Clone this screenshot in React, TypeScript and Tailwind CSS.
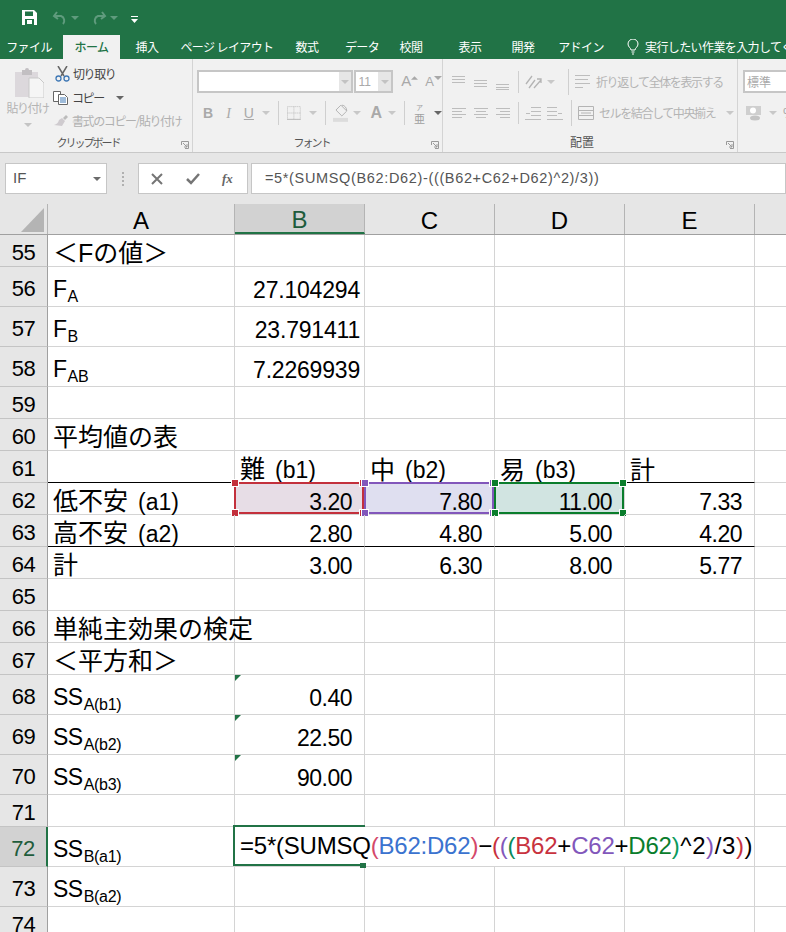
import type { ReactNode } from "react";

const UI_FONT = "font-['Noto_Sans_CJK_JP',sans-serif]";
const CELL_FONT = "font-['Liberation_Sans','Noto_Sans_CJK_JP',sans-serif]";

const TABS: [string, number][] = [
  ["ホーム", 57],
  ["挿入", 54],
  ["ページ レイアウト", 106],
  ["数式", 54],
  ["データ", 56],
  ["校閲", 42],
  ["表示", 76],
  ["開発", 30],
  ["アドイン", 86],
];

function Caret({ color = "#a8a8a8" }: { color?: string }) {
  return (
    <svg width="8" height="4" viewBox="0 0 8 4" className="shrink-0">
      <path d="M0 0h8L4 4z" fill={color} />
    </svg>
  );
}

// horizontal rule icons for the alignment group
function Lines({ rows, w = 16, h = 16 }: { rows: [number, number, number][]; w?: number; h?: number }) {
  return (
    <svg width={w} height={h} viewBox={`0 0 ${w} ${h}`} className="shrink-0">
      {rows.map(([a, b, y], i) => (
        <line key={i} x1={a} x2={b} y1={y + 0.5} y2={y + 0.5} stroke="#bdbdbd" />
      ))}
    </svg>
  );
}

function TitleBar() {
  return (
    <div className="flex h-[35px] items-center bg-[#217346] pl-[22px]">
      <svg width="15" height="15" viewBox="0 0 15 15">
        <path d="M0 0h12l3 3v12H0z" fill="#fff" />
        <rect x="3" y="1.500" width="8" height="4.500" fill="#217346" />
        <rect x="3" y="9" width="9" height="6" fill="#217346" />
        <rect x="5" y="10" width="5" height="4" fill="#fff" />
      </svg>
      <svg width="16" height="14" viewBox="0 0 16 14" fill="none" stroke="#5f9b7d" strokeWidth="2" className="ml-[15px]">
        <path d="M5 1 2 5l4 3M2 5h7a5 5 0 0 1 2 8" />
      </svg>
      <div className="ml-[3px]"><Caret color="#5f9b7d" /></div>
      <svg width="16" height="14" viewBox="0 0 16 14" fill="none" stroke="#5f9b7d" strokeWidth="2" className="ml-[12px]">
        <path d="m11 1 3 4-4 3m4-3H7a5 5 0 0 0-2 8" />
      </svg>
      <div className="ml-[3px]"><Caret color="#5f9b7d" /></div>
      <svg width="7" height="7" viewBox="0 0 7 7" className="ml-[13px] mt-[3px]">
        <path d="M0 0h7v1H0zM0 3h7L3.500 7z" fill="#fff" />
      </svg>
    </div>
  );
}

function TabBar() {
  return (
    <div className={`flex h-[24px] items-center bg-[#217346] text-[12px] tracking-[-0.6px] text-white ${UI_FONT}`}>
      <div className="flex w-[63px] shrink-0 justify-center whitespace-nowrap pr-[5px]">ファイル</div>
      {TABS.map(([label, width], i) => (
        <div
          key={label}
          style={{ width }}
          className={`flex h-full shrink-0 items-center justify-center whitespace-nowrap ${
            i === 0 ? "bg-[#f1f1f1] font-medium text-[#217346]" : ""
          }`}
        >
          {label}
        </div>
      ))}
      <svg width="12" height="16" viewBox="0 0 12 16" fill="none" stroke="#fff" className="ml-[3px] shrink-0">
        <path d="M4 11c0-2-3-3-3-6a5 5 0 0 1 10 0c0 3-3 4-3 6zM4.500 13h3M5 15h2" />
      </svg>
      <span className="ml-[6px] whitespace-nowrap">実行したい作業を入力してください</span>
    </div>
  );
}

function GroupLabel({ children, wide }: { children: string; wide?: boolean }) {
  return (
    <div
      className={`relative mt-auto flex h-[18px] items-center justify-center whitespace-nowrap pb-[2px] pr-[16px] text-[#555] ${
        wide ? "text-[12px]" : "text-[11px] tracking-[-2px]"
      }`}
    >
      {children}
      <svg width="8" height="8" viewBox="0 0 8 8" fill="none" stroke="#9a9a9a" className="absolute bottom-[3px] right-[3px]">
        <path d="M.5 4V.5H7.500V7.500H4M2 2l4 4M3 6h3V3" />
      </svg>
    </div>
  );
}

function ClipboardGroup() {
  return (
    <div className="flex w-[193px] shrink-0 flex-col border-r border-[#d4d4d4]">
      <div className="flex pt-[3px]">
        <div className="mt-[5px] flex w-[52px] shrink-0 flex-col items-center pl-[3px]">
          <svg width="30" height="31" viewBox="0 0 30 31" className="ml-[2px]">
            <path d="M1 5h23v25H1z" fill="#dcd8dc" />
            <path d="M8 3h3a2 2 0 0 1 4 0h3v5H8z" fill="#c2bfc2" />
            <path d="M15 11h10l5 5v15H15z" fill="#f5f5f5" stroke="#c9c9c9" />
          </svg>
          <span className="mt-[1px] whitespace-nowrap text-[12px] tracking-[-1.5px] text-[#b4b4b4]">貼り付け</span>
          <div className="mt-[6px]"><Caret color="#c4c4c4" /></div>
        </div>
        <div className="flex flex-col text-[12px] tracking-[-1.4px]">
          <div className="flex h-[24px] items-center">
            <svg width="15" height="16" viewBox="0 0 15 16" fill="none" className="ml-[3px]">
              <path d="M3 0l6 10M12 0 6 10" stroke="#666" strokeWidth="1.500" />
              <circle cx="3.500" cy="12.500" r="2.500" stroke="#3f78b5" strokeWidth="1.300" />
              <circle cx="11.500" cy="12.500" r="2.500" stroke="#3f78b5" strokeWidth="1.300" />
            </svg>
            <span className="ml-[3px] text-[#444]">切り取り</span>
          </div>
          <div className="flex h-[23px] items-center">
            <svg width="16" height="14" viewBox="0 0 16 14" fill="#fff" stroke="#666" className="ml-[1px]">
              <path d="M.5.500h7v10h-7z" />
              <path d="M5.500 3.500h6l3 3v7h-9z" />
              <path d="M7 7h6M7 9h6M7 11h6" stroke="#3f78b5" />
            </svg>
            <span className="ml-[3px] text-[#444]">コピー</span>
            <div className="ml-[12px]"><Caret color="#666" /></div>
          </div>
          <div className="flex h-[24px] items-center">
            <svg width="16" height="15" viewBox="0 0 16 15" className="ml-[1px]">
              <path d="M9 4l3 3-3 5-8-1c3-1 4-2 5-5z" fill="#cfcbcf" />
              <path d="M10 4l3-3 2 2-3 3z" fill="#bcbcbc" />
            </svg>
            <span className="ml-[3px] whitespace-nowrap text-[#b0b0b0]">書式のコピー/貼り付け</span>
          </div>
        </div>
      </div>
      <GroupLabel>クリップボード</GroupLabel>
    </div>
  );
}

function FontGroup() {
  return (
    <div className="flex w-[250px] shrink-0 flex-col border-r border-[#d4d4d4] pl-[4px]">
      <div className="mt-[11px] flex items-center">
        <div className="flex h-[23px] w-[157px] justify-end border-2 border-[#c6c6c6] bg-white">
          <div className="flex w-[12px] items-center justify-center bg-[#e6e6e6]"><Caret color="#c2c2c2" /></div>
        </div>
        <div className="ml-[1px] flex h-[23px] w-[39px] items-center justify-between border-2 border-[#c6c6c6] bg-white pl-[2px] font-['Liberation_Sans',sans-serif] text-[12px] text-[#a9a9a9]">
          11
          <div className="flex h-full w-[13px] items-center justify-center bg-[#e6e6e6]"><Caret color="#c2c2c2" /></div>
        </div>
        <span className="ml-[8px] font-['Liberation_Sans',sans-serif] text-[15px] text-[#a9a9a9]">A</span>
        <svg width="7" height="4" viewBox="0 0 8 4" className="mb-[8px]"><path d="M0 4h8L4 0z" fill="#a9a9a9" /></svg>
        <span className="ml-[7px] font-['Liberation_Sans',sans-serif] text-[13px] text-[#a9a9a9]">A</span>
        <div className="mb-[8px]"><Caret /></div>
      </div>
      <div className="mt-[7px] flex h-[26px] items-center font-['Liberation_Sans',sans-serif] text-[14px] text-[#a9a9a9]">
        <b className="ml-[6px]">B</b>
        <i className="ml-[13px] font-['Liberation_Serif',serif]">I</i>
        <span className="ml-[13px] underline">U</span>
        <div className="ml-[8px]"><Caret color="#c8c8c8" /></div>
        <div className="ml-[8px] h-[24px] border-l border-[#cfcfcf]" />
        <svg width="14" height="14" viewBox="0 0 14 14" fill="none" stroke="#bdbdbd" strokeDasharray="1 1" className="ml-[8px]">
          <path d="M.5.500h13v13H.5zM7 .5v13M.5 7h13" />
          <path d="M0 13.500h14" strokeDasharray="none" />
        </svg>
        <div className="ml-[8px]"><Caret color="#c8c8c8" /></div>
        <div className="ml-[8px] h-[24px] border-l border-[#cfcfcf]" />
        <svg width="16" height="18" viewBox="0 0 16 18" fill="none" className="ml-[7px]">
          <path d="M8 1 14 7l-5 5-6-6z" stroke="#b4b4b4" />
          <path d="M9 1c3 0 5 3 5 6" stroke="#b4b4b4" />
          <rect y="14" width="16" height="4" fill="#dcdcdc" />
        </svg>
        <div className="ml-[5px]"><Caret color="#c8c8c8" /></div>
        <b className="ml-[9px] text-[16px]">A</b>
        <div className="ml-[6px]"><Caret color="#c8c8c8" /></div>
        <div className="ml-[8px] h-[24px] border-l border-[#cfcfcf]" />
        <div className="ml-[9px] flex flex-col items-center font-['Noto_Sans_CJK_JP',sans-serif] text-[#a0a0a0]">
          <span className="text-[7px] leading-[10px]">ア</span>
          <span className="text-[11px] leading-[13px]">亜</span>
        </div>
        <div className="ml-[9px]"><Caret color="#666" /></div>
      </div>
      <GroupLabel>フォント</GroupLabel>
    </div>
  );
}

function AlignGroup() {
  return (
    <div className="flex w-[295px] shrink-0 flex-col border-r border-[#d4d4d4] pl-[8px]">
      <div className="mt-[11px] flex h-[24px] items-center gap-[6px]">
        <Lines rows={[[1, 14, 2], [1, 14, 5], [1, 14, 8]]} />
        <Lines rows={[[1, 14, 6], [1, 14, 9], [1, 14, 12]]} />
        <Lines rows={[[1, 14, 10], [1, 14, 13], [1, 14, 15]]} />
        <div className="ml-[1px] h-[22px] border-l border-[#cfcfcf]" />
        <svg width="18" height="16" viewBox="0 0 18 16" fill="none" stroke="#b4b4b4" strokeWidth="1.300">
          <path d="M1 10 7 2M4 14 10 6M9 14l7-8M12 5h4v4" />
        </svg>
        <div className="-ml-[2px]"><Caret color="#c8c8c8" /></div>
        <div className="ml-[7px] h-[26px] border-l border-[#cfcfcf]" />
        <Lines rows={[[0, 15, 1], [0, 13, 5], [0, 15, 9], [0, 8, 13]]} />
        <span className="-ml-[1px] whitespace-nowrap text-[12px] tracking-[-1.4px] text-[#b4b4b4]">折り返して全体を表示する</span>
      </div>
      <div className="mt-[7px] flex h-[24px] items-center gap-[6px]">
        <Lines rows={[[1, 15, 3], [1, 11, 6], [1, 15, 9], [1, 11, 12]]} />
        <Lines rows={[[1, 15, 3], [3, 13, 6], [1, 15, 9], [3, 13, 12]]} />
        <Lines rows={[[1, 15, 3], [5, 15, 6], [1, 15, 9], [5, 15, 12]]} />
        <div className="ml-[1px] h-[22px] border-l border-[#cfcfcf]" />
        <Lines rows={[[6, 16, 2], [6, 16, 6], [6, 16, 10], [0, 16, 14], [1, 5, 8]]} />
        <Lines rows={[[0, 10, 2], [0, 10, 6], [0, 10, 10], [0, 16, 14], [11, 15, 8]]} />
        <div className="ml-[2px] h-[26px] border-l border-[#cfcfcf]" />
        <svg width="16" height="16" viewBox="0 0 16 16" fill="none" stroke="#b4b4b4" className="shrink-0">
          <path d="M.5 1.500h15v13H.5zM.5 5.500h15M.5 10.500h15M3 8h10" />
        </svg>
        <span className="-ml-[1px] whitespace-nowrap text-[12px] tracking-[-1.4px] text-[#b4b4b4]">セルを結合して中央揃え</span>
        <div className="ml-[5px]"><Caret color="#c8c8c8" /></div>
      </div>
      <div className="-ml-[8px] mt-auto"><GroupLabel wide>配置</GroupLabel></div>
    </div>
  );
}

function NumberGroup() {
  return (
    <div className="flex flex-col pl-[5px]">
      <div className="mt-[11px] flex h-[23px] w-[60px] items-center border-2 border-[#c6c6c6] bg-white pl-[2px] text-[12px] text-[#a9a9a9]">
        標準
      </div>
      <div className="mt-[8px] flex h-[24px] items-center">
        <svg width="16" height="16" viewBox="0 0 16 16" className="ml-[3px]">
          <rect y="1" width="15" height="9" fill="#cfcfcf" />
          <circle cx="7" cy="5.500" r="3" fill="#fff" />
          <ellipse cx="9" cy="13" rx="5" ry="2.500" fill="#c4c4c4" />
        </svg>
        <div className="ml-[7px]"><Caret color="#c8c8c8" /></div>
        <span className="ml-[6px] font-['Liberation_Sans',sans-serif] text-[14px] text-[#a9a9a9]">%</span>
      </div>
    </div>
  );
}

function FormulaBar() {
  return (
    <div className={`flex h-[52px] items-center border-t border-[#c8c8c8] bg-[#e6e6e6] pl-[5px] ${CELL_FONT}`}>
      <div className="flex h-[31px] w-[102px] items-center justify-between border border-[#c6c6c6] bg-white pl-[7px] pr-[5px] text-[15px] text-[#555]">
        IF
        <Caret color="#6b6b6b" />
      </div>
      <div className="ml-[15px] flex flex-col gap-[2px]">
        <div className="h-[2px] w-[2px] bg-[#b0b0b0]" />
        <div className="h-[2px] w-[2px] bg-[#b0b0b0]" />
        <div className="h-[2px] w-[2px] bg-[#b0b0b0]" />
        <div className="h-[2px] w-[2px] bg-[#b0b0b0]" />
      </div>
      <div className="ml-[14px] flex h-[31px] w-[110px] items-center border border-[#c6c6c6] bg-white">
        <svg width="12" height="12" viewBox="0 0 12 12" stroke="#757575" strokeWidth="2" className="ml-[12px]">
          <path d="m1 1 10 10M11 1 1 11" />
        </svg>
        <svg width="14" height="12" viewBox="0 0 14 12" fill="none" stroke="#757575" strokeWidth="2.500" className="ml-[23px]">
          <path d="m1 6 4 4 8-9" />
        </svg>
        <span className="ml-[22px] font-['Liberation_Serif',serif] text-[13px] font-bold italic text-[#666]">fx</span>
      </div>
      <div className="ml-[3px] flex h-[31px] flex-1 items-center border border-[#c6c6c6] bg-white pl-[13px] text-[14.500px] tracking-[0.65px] text-[#555]">
        =5*(SUMSQ(B62:D62)-(((B62+C62+D62)^2)/3))
      </div>
    </div>
  );
}

function ColHeader({ label, active, width }: { label: string; active?: boolean; width: number }) {
  return (
    <div
      style={{ width }}
      className={`flex shrink-0 items-center justify-center border-r border-[#b4b4b4] pt-[3px] text-[24px] ${
        active ? "border-b-2 border-b-[#217346] bg-[#d2d2d2] text-[#1e5c3c]" : "text-black"
      }`}
    >
      {label}
    </div>
  );
}

function ColumnHeaders() {
  return (
    <div className={`flex h-[31px] border-b border-[#a0a0a0] bg-[#e6e6e6] ${CELL_FONT}`}>
      <div className="flex w-[48px] shrink-0 items-end justify-end border-r border-[#b4b4b4] pb-[2px] pr-[3px]">
        <svg width="23" height="24" viewBox="0 0 23 24"><path d="M23 0v24H0z" fill="#b4b4b4" /></svg>
      </div>
      <ColHeader label="A" width={187} />
      <ColHeader label="B" width={130} active />
      <ColHeader label="C" width={130} />
      <ColHeader label="D" width={130} />
      <ColHeader label="E" width={130} />
    </div>
  );
}

function Sub({ base, sub }: { base: string; sub: string }) {
  return (
    <>
      {base}
      <span className="ml-[1px] align-[-5px] text-[16px] leading-[0] tracking-[-0.3px]">{sub}</span>
    </>
  );
}

// Japanese runs are wider in the original than the Latin digits beside them
function Jp({ children }: { children: string }) {
  return <span className="text-[25px] tracking-[0]">{children}</span>;
}

function Label({ jp, latin }: { jp: string; latin: string }) {
  return (
    <>
      <Jp>{jp}</Jp>
      <span className="ml-[10px] tracking-[0]">{latin}</span>
    </>
  );
}

type CellProps = {
  children?: ReactNode;
  width: number;
  right?: boolean;
  tight?: boolean;
  noGrid?: boolean;
  bottomBlack?: boolean;
};

function Cell({ children, width, right, tight, noGrid, bottomBlack }: CellProps) {
  return (
    <div
      style={{ width }}
      className={`relative flex shrink-0 items-end whitespace-nowrap border-b leading-[24px] ${
        bottomBlack ? "border-b-black" : "border-b-[#d4d4d4]"
      } ${noGrid ? "" : "border-r border-r-[#d4d4d4]"} ${
        right ? `justify-end ${tight ? "pr-[4px] tracking-[-0.2px]" : "pr-[12px]"}` : "pl-[5px]"
      }`}
    >
      {children}
    </div>
  );
}

type RowData = {
  n: number;
  h: 32 | 40;
  a?: ReactNode;
  b?: ReactNode;
  c?: ReactNode;
  d?: ReactNode;
  e?: ReactNode;
  head?: boolean;
  tight?: boolean;
  flag?: boolean;
  black?: boolean;
};

const ROWS: RowData[] = [
  { n: 55, h: 32, a: <Jp>＜Fの値＞</Jp> },
  { n: 56, h: 40, a: <Sub base="F" sub="A" />, b: "27.104294", tight: true },
  { n: 57, h: 40, a: <Sub base="F" sub="B" />, b: "23.791411", tight: true },
  { n: 58, h: 40, a: <Sub base="F" sub="AB" />, b: "7.2269939", tight: true },
  { n: 59, h: 32 },
  { n: 60, h: 32, a: <Jp>平均値の表</Jp> },
  {
    n: 61,
    h: 32,
    b: <Label jp="難" latin="(b1)" />,
    c: <Label jp="中" latin="(b2)" />,
    d: <Label jp="易" latin="(b3)" />,
    e: <Jp>計</Jp>,
    head: true,
    black: true,
  },
  { n: 62, h: 32, a: <Label jp="低不安" latin="(a1)" />, b: "3.20", c: "7.80", d: "11.00", e: "7.33" },
  { n: 63, h: 32, a: <Label jp="高不安" latin="(a2)" />, b: "2.80", c: "4.80", d: "5.00", e: "4.20", black: true },
  { n: 64, h: 32, a: <Jp>計</Jp>, b: "3.00", c: "6.30", d: "8.00", e: "5.77" },
  { n: 65, h: 32 },
  { n: 66, h: 32, a: <Jp>単純主効果の検定</Jp> },
  { n: 67, h: 32, a: <Jp>＜平方和＞</Jp> },
  { n: 68, h: 40, a: <Sub base="SS" sub="A(b1)" />, b: "0.40", flag: true },
  { n: 69, h: 40, a: <Sub base="SS" sub="A(b2)" />, b: "22.50", flag: true },
  { n: 70, h: 40, a: <Sub base="SS" sub="A(b3)" />, b: "90.00", flag: true },
  { n: 71, h: 32 },
  { n: 72, h: 40, a: <Sub base="SS" sub="B(a1)" /> },
  { n: 73, h: 40, a: <Sub base="SS" sub="B(a2)" /> },
  { n: 74, h: 32 },
];

function RefBox({ border, fill, children }: { border: string; fill: string; children: ReactNode }) {
  return (
    <div style={{ borderColor: border, backgroundColor: fill }} className="absolute -left-[1px] -top-[1px] bottom-0 right-0 flex items-end justify-end border-2 pr-[10px] leading-[24px]">
      <span className="translate-y-[2px]">{children}</span>
      <i style={{ backgroundColor: border }} className="absolute -left-[4px] -top-[4px] h-[6px] w-[6px] outline outline-1 outline-white" />
      <i style={{ backgroundColor: border }} className="absolute -right-[4px] -top-[4px] h-[6px] w-[6px] outline outline-1 outline-white" />
      <i style={{ backgroundColor: border }} className="absolute -bottom-[4px] -left-[4px] h-[6px] w-[6px] outline outline-1 outline-white" />
      <i style={{ backgroundColor: border }} className="absolute -bottom-[4px] -right-[4px] h-[6px] w-[6px] outline outline-1 outline-white" />
    </div>
  );
}

function EditingFormula() {
  return (
    <div className="absolute -left-[2px] -top-[2px] z-20 flex h-[41px] w-[132px] items-end border-y-2 border-l-2 border-[#217346] pl-[5px]">
      <span className="pb-[6px] text-[24px] leading-[24px] tracking-[-0.22px] text-black">
        =5*(SUMSQ
        <span className="text-[#d4486a]">(</span>
        <span className="text-[#3b73cf]">B62:D62</span>
        <span className="text-[#d4486a]">)</span>
        −
        <span className="text-[#c8323e]">(</span>
        <span className="text-[#8257bb]">(</span>
        <span className="text-[#0b8a5a]">(</span>
        <span className="text-[#c8323e]">B62</span>+
        <span className="text-[#8257bb]">C62</span>+
        <span className="text-[#0a7d2c]">D62</span>
        <span className="tracking-[0.6px]">
          <span className="text-[#0a9a5c]">)</span>^2
          <span className="text-[#8257bb]">)</span>/3
          <span className="text-[#c8323e]">)</span>
          <span className="text-black">)</span>
        </span>
      </span>
      <i className="absolute -bottom-[4px] right-[-1px] h-[5px] w-[6px] bg-[#217346]" />
    </div>
  );
}

function Row({ row }: { row: RowData }) {
  const selected = row.n === 72;
  const isRef = row.n === 62;
  const align = !row.head;
  const liftA = row.h === 40 ? "block pb-[5px]" : "block";
  const liftB = row.h === 40 ? "block pb-[4px]" : "block";
  return (
    <div style={{ height: row.h }} className="flex">
      <div
        className={`flex w-[48px] shrink-0 items-center justify-center border-b border-[#c4c4c4] pt-[3px] text-[22px] tracking-[-0.4px] ${
          selected ? "border-r-2 border-r-[#217346] bg-[#d2d2d2] text-[#1e5c3c]" : "border-r border-r-[#a0a0a0] bg-[#e6e6e6] text-black"
        }`}
      >
        {row.n}
      </div>
      <Cell width={187} bottomBlack={row.black}>
        <span className={liftA}>{row.a}</span>
      </Cell>
      <Cell width={130} right={align} tight={row.tight} noGrid={selected} bottomBlack={row.black}>
        {row.flag && (
          <svg width="6" height="6" viewBox="0 0 6 6" className="absolute left-0 top-0">
            <path d="M0 0h6L0 6z" fill="#217346" />
          </svg>
        )}
        {isRef ? <RefBox border="#c3303c" fill="#e7dde6">{row.b}</RefBox> : <span className={liftB}>{row.b}</span>}
        {selected && <EditingFormula />}
      </Cell>
      <Cell width={130} right={align} noGrid={selected} bottomBlack={row.black}>
        {isRef ? <RefBox border="#8257bb" fill="#dfdff0">{row.c}</RefBox> : row.c}
      </Cell>
      <Cell width={130} right={align} noGrid={selected} bottomBlack={row.black}>
        {isRef ? <RefBox border="#0a7d2c" fill="#d1e4e1">{row.d}</RefBox> : row.d}
      </Cell>
      <Cell width={130} right={align} bottomBlack={row.black}>
        {row.e}
      </Cell>
      <div className="flex-1 border-b border-b-[#d4d4d4]" />
    </div>
  );
}

export default function App() {
  return (
    <div className="h-[932px] w-[786px] overflow-hidden bg-white">
      <TitleBar />
      <TabBar />
      <div className={`flex h-[93px] bg-[#f1f1f1] ${UI_FONT}`}>
        <ClipboardGroup />
        <FontGroup />
        <AlignGroup />
        <NumberGroup />
      </div>
      <FormulaBar />
      <ColumnHeaders />
      <div className={`text-[23px] tracking-[-0.5px] text-black ${CELL_FONT}`}>
        {ROWS.map((row) => (
          <Row key={row.n} row={row} />
        ))}
      </div>
    </div>
  );
}
